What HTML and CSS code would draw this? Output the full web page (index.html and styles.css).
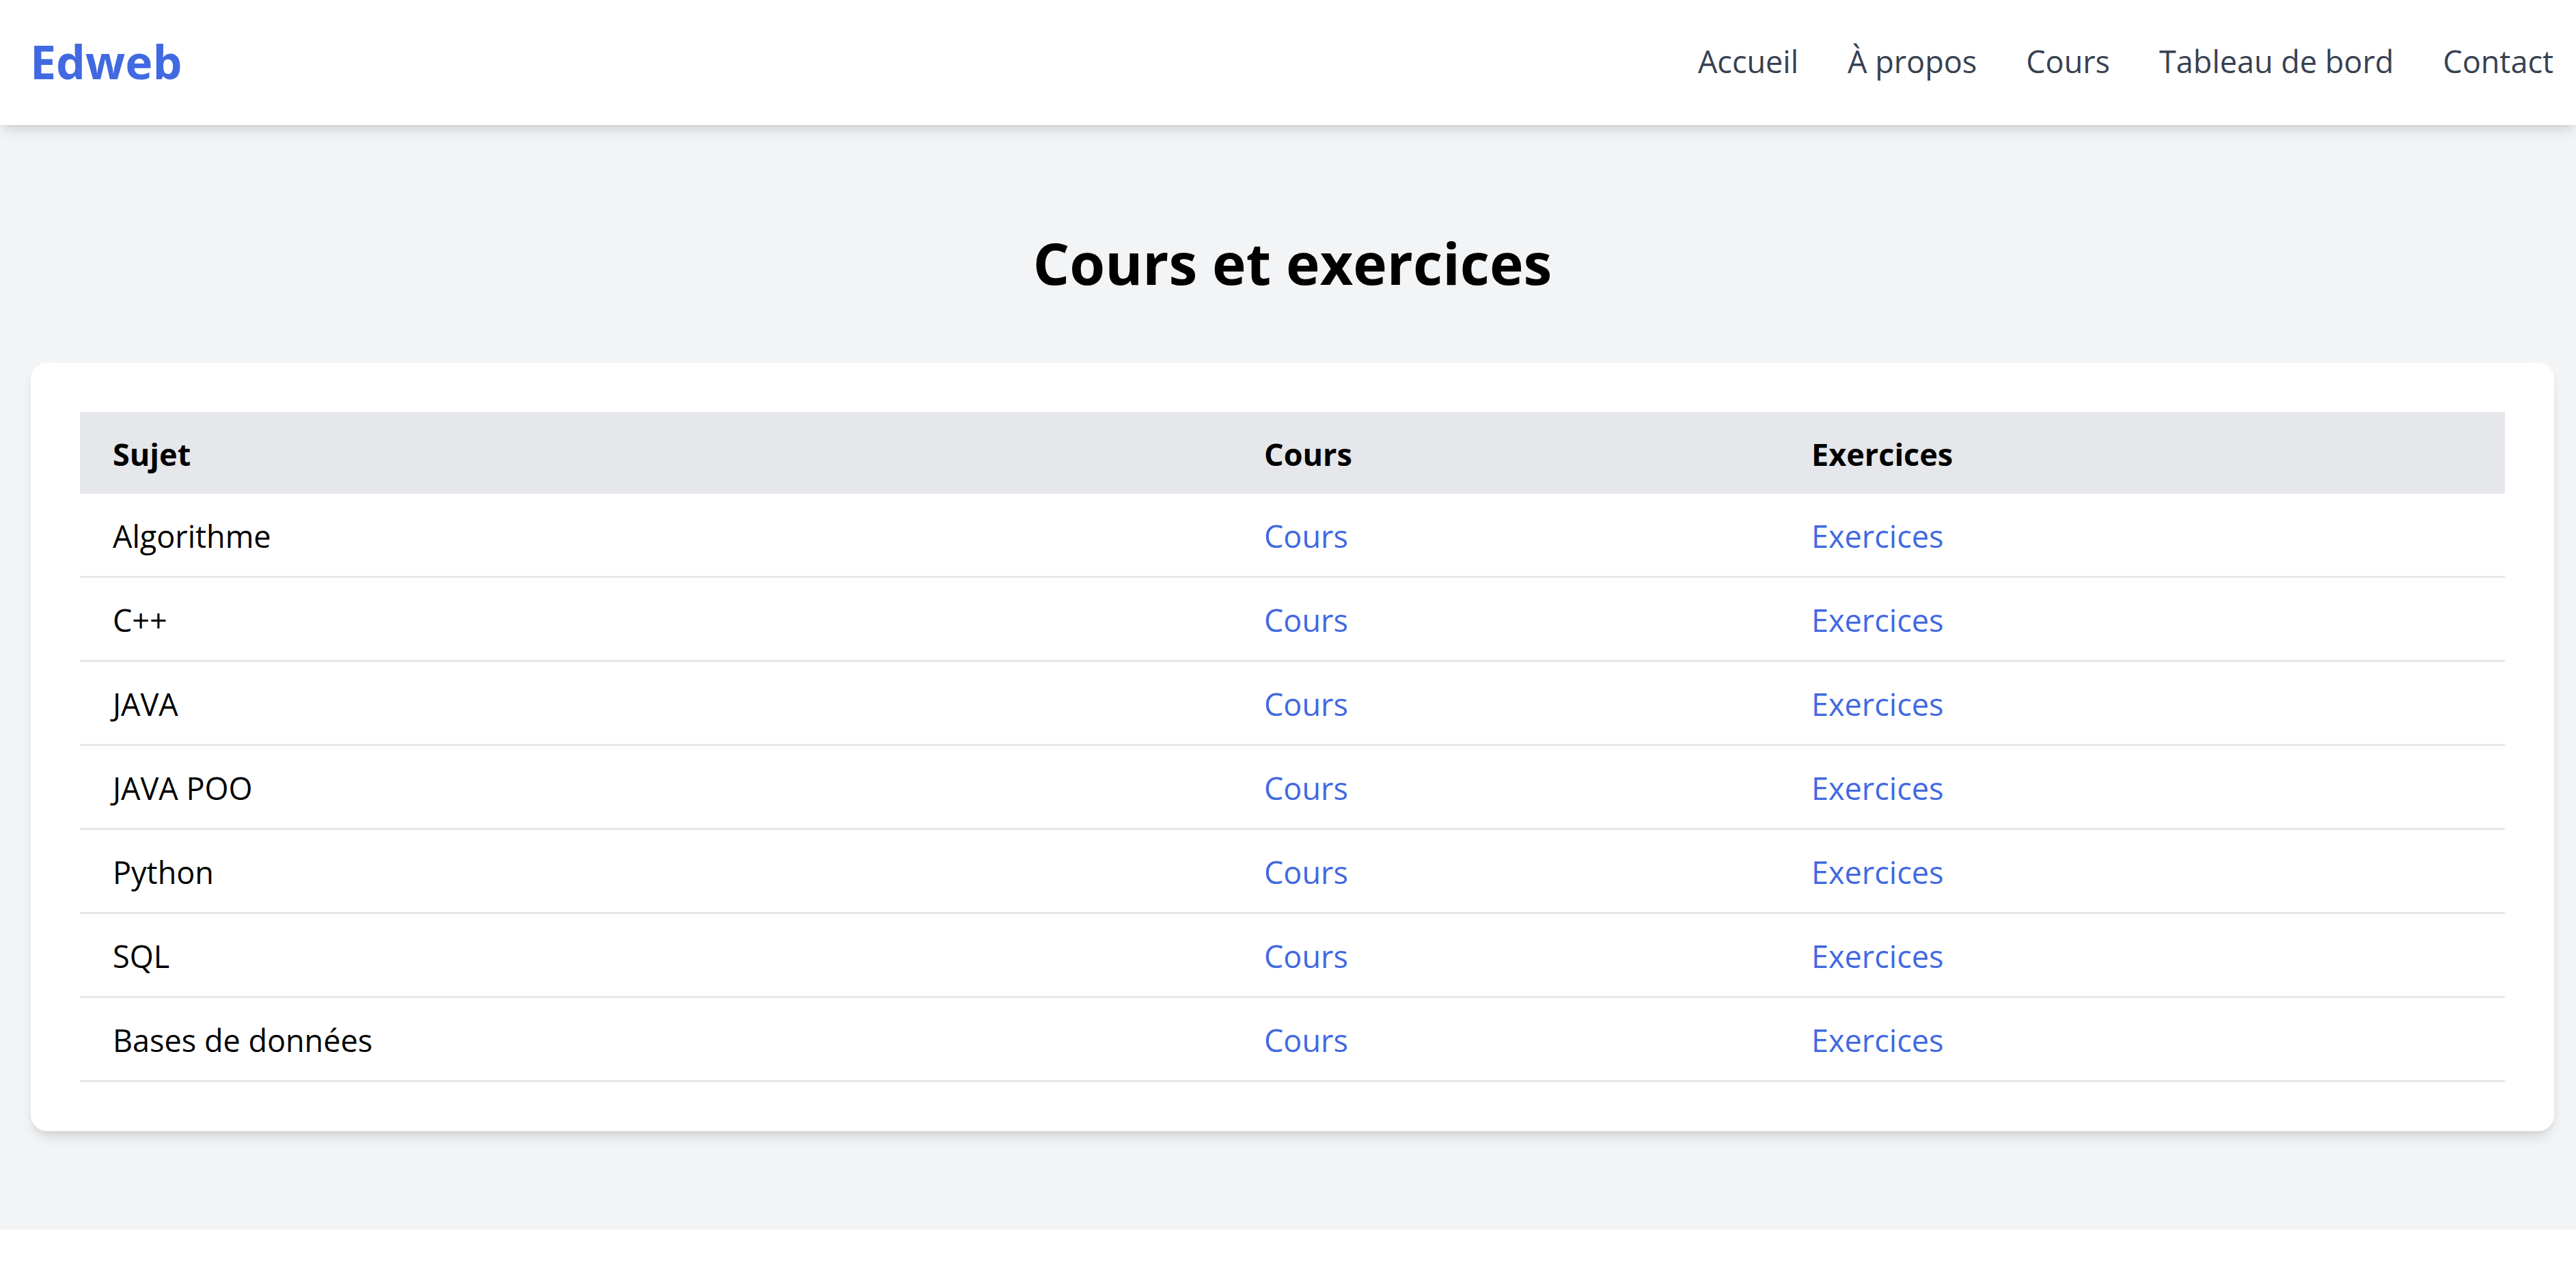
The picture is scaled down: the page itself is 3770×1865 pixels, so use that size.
FILE: index.html
```html
<!DOCTYPE html>
<html lang="fr">
<head>
<meta charset="utf-8">
<title>Edweb - Cours et exercices</title>
<link rel="stylesheet" href="styles.css">
</head>
<body>
<header class="site-header">
  <div class="header-inner">
    <a class="logo" href="#">Edweb</a>
    <nav class="nav">
      <a href="#">Accueil</a>
      <a href="#">À propos</a>
      <a href="#">Cours</a>
      <a href="#">Tableau de bord</a>
      <a href="#">Contact</a>
    </nav>
  </div>
</header>
<main class="main">
  <div class="container">
    <h1 class="title">Cours et exercices</h1>
    <div class="card">
      <table class="courses">
        <colgroup>
          <col class="col-subject">
          <col class="col-course">
          <col class="col-exercise">
        </colgroup>
        <thead>
          <tr><th>Sujet</th><th>Cours</th><th>Exercices</th></tr>
        </thead>
        <tbody>
          <tr><td>Algorithme</td><td><a href="#">Cours</a></td><td><a href="#">Exercices</a></td></tr>
          <tr><td>C++</td><td><a href="#">Cours</a></td><td><a href="#">Exercices</a></td></tr>
          <tr><td>JAVA</td><td><a href="#">Cours</a></td><td><a href="#">Exercices</a></td></tr>
          <tr><td>JAVA POO</td><td><a href="#">Cours</a></td><td><a href="#">Exercices</a></td></tr>
          <tr><td>Python</td><td><a href="#">Cours</a></td><td><a href="#">Exercices</a></td></tr>
          <tr><td>SQL</td><td><a href="#">Cours</a></td><td><a href="#">Exercices</a></td></tr>
          <tr><td>Bases de données</td><td><a href="#">Cours</a></td><td><a href="#">Exercices</a></td></tr>
        </tbody>
      </table>
    </div>
  </div>
</main>
</body>
</html>
```
FILE: styles.css
```css
* { box-sizing: border-box; }
html, body { margin: 0; padding: 0; }
body {
  font-family: "Open Sans", "Noto Sans", "Liberation Sans", sans-serif;
  font-size: 45px;
  line-height: 72px;
  color: #000;
  background: #fff;
}
a { text-decoration: none; }

.site-header {
  background: #fff;
  box-shadow: 0 12px 18px -3px rgba(0,0,0,0.1), 0 6px 12px -6px rgba(0,0,0,0.1);
  position: relative;
  z-index: 1;
}
.header-inner {
  height: 183px;
  padding: 0 32px 0 44px;
  display: flex;
  align-items: center;
  justify-content: space-between;
}
.logo {
  color: #4169e1;
  font-weight: 700;
  font-size: 68px;
  line-height: 96px;
  margin-top: -3px;
}
.nav {
  display: flex;
  gap: 72px;
  font-size: 45px;
  margin-top: -3px;
  margin-right: 1px;
}
.nav a { color: #374151; }

.main {
  background: #f3f4f6;
  padding: 144px 0;
}
.container {
  padding: 0 32px 0 45px;
}
.title {
  margin: 0 0 92px;
  padding-top: 4px;
  text-align: center;
  font-size: 84px;
  line-height: 108px;
  font-weight: 700;
}
.card {
  background: #fff;
  border-radius: 24px;
  padding: 72px;
  box-shadow: 0 12px 18px -3px rgba(0,0,0,0.1), 0 6px 12px -6px rgba(0,0,0,0.1);
}
.courses {
  width: 100%;
  border-collapse: collapse;
  table-layout: fixed;
}
.col-subject { width: 1685px; }
.col-course { width: 801px; }
.courses th {
  background: #e5e7eb;
  text-align: left;
  font-weight: 700;
  padding: 26px 48px 22px;
}
.courses td {
  padding: 26px 48px 22px;
  border-bottom: 3px solid #e5e7eb;
}
.courses td a { color: #4169e1; }
```
